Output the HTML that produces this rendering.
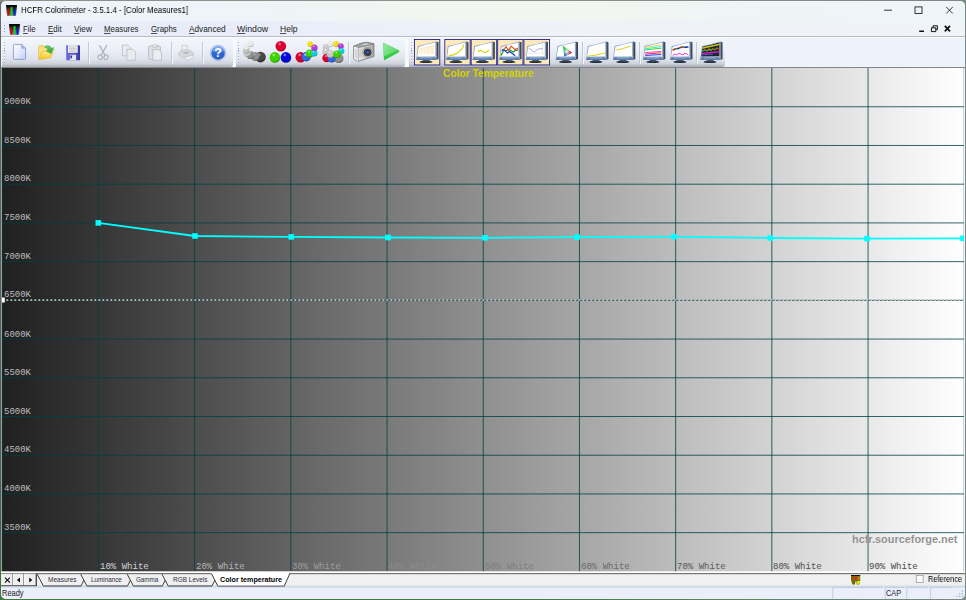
<!DOCTYPE html>
<html><head><meta charset="utf-8"><title>HCFR Colorimeter</title>
<style>
*{margin:0;padding:0;box-sizing:border-box}
html,body{width:966px;height:600px;overflow:hidden}
body{background:linear-gradient(to right,transparent 0,transparent 480px,#7c8a84 964px),linear-gradient(to bottom,#8c918c 0,#8c918c 1px,#646e64 3px,#56625a 50%,#4a5c46 88%,#3f7a3a 100%);font-family:"Liberation Sans", sans-serif;position:relative}
#win{position:absolute;left:1px;top:1px;width:964px;height:598px;border-radius:5px;overflow:hidden;background:#eef2fa}
.abs{position:absolute}
.t{position:absolute;white-space:nowrap;line-height:1;color:#000;transform-origin:0 100%}
.m{font-family:"Liberation Mono", monospace}
.b{font-weight:bold}
.g{will-change:transform}
u{text-decoration:underline;text-underline-offset:1px;text-decoration-thickness:.7px;text-decoration-color:rgba(0,0,0,.65)}
#title{left:0;top:0;width:964px;height:20px;background:linear-gradient(to right,#eef4f9 0,#eef4f8 25%,#f1f6f0 45%,#f2f6ef 58%,#eff5f6 75%,#eef4f8 100%)}
#menu{left:0;top:20px;width:964px;height:15px;background:linear-gradient(to right,#e8ecf9 0,#e9edf9 25%,#eef2f8 50%,#f0f4f8 100%)}
.tb{position:absolute;top:37px;height:28.8px;background:linear-gradient(to bottom,#f3f6fc 0,#ebeff7 40%,#dfe3ec 72%,#cfd3dc 88%,#b6bac3 96%,#a6aab3 100%);border-radius:0 0 3px 0}
.sep{position:absolute;top:40.5px;height:22px;width:1.7px;border-left:.85px solid #c2c8d4;border-right:.85px solid #f2f5fa}
.grip{position:absolute;top:40.6px;width:1.2px;height:21.6px;background:repeating-linear-gradient(to bottom,#9aaad0 0,#9aaad0 1.2px,#fbfcfe 1.2px,#fbfcfe 1.9px,transparent 1.9px,transparent 2.8px);}
.chk{position:absolute;top:38px;height:27px;width:26.3px;background:#fde9ba;border:1.1px solid #15158a}
#chart{left:1px;top:67px;width:962px;height:504px;background:linear-gradient(to right,#202020,#ffffff);box-shadow:-1px 0 0 #9c9c9c}
#tabs{left:0;top:571px;width:964px;height:15px;background:#f0f0f0}
#status{left:0;top:586px;width:964px;height:12px;background:#eaeff9}
.pane{position:absolute;top:586px;height:13px;border-top:1px solid #c3d0e4;border-left:1px solid #c3d0e4}
</style></head>
<body>
<div id="win">
<div id="title" class="abs"></div>
<svg class="abs" style="left:5px;top:4px" width="11" height="11" viewBox="0 0 11 11">
<defs><linearGradient id="ig6" x1="0" y1="0" x2="0" y2="1"><stop offset="0" stop-color="#000"/><stop offset=".45" stop-color="#333"/><stop offset="1" stop-color="#999"/></linearGradient></defs>
<path d="M0 0H11L10 11H1Z" fill="url(#ig6)"/>
<rect x="1.5" y="3.2" width="2" height="7.4" rx="1" fill="#d80000"/>
<rect x="4.5" y="2" width="2.1" height="8.6" rx="1" fill="#00d828"/>
<rect x="7.5" y="4" width="1.9" height="6.6" rx=".9" fill="#0818e0"/>
</svg>
<div class="t g" id="t0" style="left:20.00px;top:5.31px;font-size:9.2px;color:#000;transform:scale(0.857,1.0)">HCFR Colorimeter - 3.5.1.4 - [Color Measures1]</div>
<div id="menu" class="abs"></div>
<div class="abs" style="left:0;top:35px;width:964px;height:1px;background:#b9bcc4"></div>
<div class="abs" style="left:0;top:36px;width:964px;height:1px;background:#fafbfd"></div>
<div class="abs" style="left:3px;top:23.5px;width:1.3px;height:8px;background:repeating-linear-gradient(to bottom,#8fa0c4 0,#8fa0c4 1.3px,transparent 1.3px,transparent 2.9px)"></div>
<svg class="abs" style="left:8px;top:23px" width="11" height="11" viewBox="0 0 11 11">
<defs><linearGradient id="ig9" x1="0" y1="0" x2="0" y2="1"><stop offset="0" stop-color="#000"/><stop offset=".45" stop-color="#333"/><stop offset="1" stop-color="#999"/></linearGradient></defs>
<path d="M0 0H11L10 11H1Z" fill="url(#ig9)"/>
<rect x="1.5" y="3.2" width="2" height="7.4" rx="1" fill="#d80000"/>
<rect x="4.5" y="2" width="2.1" height="8.6" rx="1" fill="#00d828"/>
<rect x="7.5" y="4" width="1.9" height="6.6" rx=".9" fill="#0818e0"/>
</svg>
<svg class="abs" style="left:869px;top:-1px" width="95" height="37" viewBox="870 0 95 37">
<path d="M884 10.2H892" stroke="#222" stroke-width=".9" fill="none"/>
<rect x="915" y="6.9" width="7" height="6.6" fill="none" stroke="#222" stroke-width=".9"/>
<path d="M946.2 6.9L952.8 13.5M952.8 6.9L946.2 13.5" stroke="#222" stroke-width=".9" fill="none"/>
<path d="M919.2 31.3H924" stroke="#111" stroke-width="1.5"/>
<path d="M933 25.8H937.4V29.6H933Z" fill="#f0f4f8" stroke="#111" stroke-width="1"/>
<path d="M931.4 27.8H935.8V31.6H931.4Z" fill="#f0f4f8" stroke="#111" stroke-width="1"/>
<path d="M944.8 25.8L950 31.4M950 25.8L944.8 31.4" stroke="#111" stroke-width="1.7" fill="none"/>
</svg>
<div class="t " id="t1" style="left:21.90px;top:23.14px;font-size:9.4px;color:#1c1c1c;transform:scale(0.840,1.0)"><u>F</u>ile</div>
<div class="t " id="t2" style="left:47.00px;top:23.14px;font-size:9.4px;color:#1c1c1c;transform:scale(0.847,1.0)"><u>E</u>dit</div>
<div class="t " id="t3" style="left:73.10px;top:23.14px;font-size:9.4px;color:#1c1c1c;transform:scale(0.887,1.0)"><u>V</u>iew</div>
<div class="t " id="t4" style="left:102.70px;top:23.14px;font-size:9.4px;color:#1c1c1c;transform:scale(0.838,1.0)"><u>M</u>easures</div>
<div class="t " id="t5" style="left:149.70px;top:23.14px;font-size:9.4px;color:#1c1c1c;transform:scale(0.839,1.0)"><u>G</u>raphs</div>
<div class="t " id="t6" style="left:187.50px;top:23.14px;font-size:9.4px;color:#1c1c1c;transform:scale(0.880,1.0)"><u>A</u>dvanced</div>
<div class="t " id="t7" style="left:236.00px;top:23.14px;font-size:9.4px;color:#1c1c1c;transform:scale(0.935,1.0)"><u>W</u>indow</div>
<div class="t " id="t8" style="left:279.00px;top:23.14px;font-size:9.4px;color:#1c1c1c;transform:scale(0.912,1.0)"><u>H</u>elp</div>
<div class="tb" style="left:0.5px;width:231.0px"></div>
<div class="tb" style="left:235.0px;width:168.5px"></div>
<div class="tb" style="left:407.7px;width:316.8px"></div>
<div class="abs" style="left:231.8px;top:37.6px;width:3.0px;height:28.6px;background:linear-gradient(to bottom,#f9fafd,#f4f6fb 70%,#fafbfd);border-radius:0 0 1px 1px"></div>
<div class="abs" style="left:403.8px;top:37.6px;width:3.7px;height:28.6px;background:linear-gradient(to bottom,#f9fafd,#f4f6fb 70%,#fafbfd);border-radius:0 0 1px 1px"></div>
<div class="abs" style="left:0;top:65.5px;width:964px;height:1.6px;background:linear-gradient(to bottom,#9a9da3,#6f7074)"></div>
<div class="grip" style="left:3px"></div>
<div class="grip" style="left:237px"></div>
<div class="grip" style="left:410px"></div>
<div class="sep" style="left:86.8px"></div>
<div class="sep" style="left:170.0px"></div>
<div class="sep" style="left:201.4px"></div>
<div class="sep" style="left:347.1px"></div>
<div class="sep" style="left:580.8px"></div>
<div class="sep" style="left:638.3px"></div>
<div class="sep" style="left:695.3px"></div>
<svg class="abs" style="left:-1px;top:35px" width="966" height="34" viewBox="0 36 966 34"><rect x="414.40" y="39.45" width="25.40" height="25.5" fill="#fde9ba" stroke="#16168a" stroke-width=".85"/><rect x="444.80" y="39.45" width="25.35" height="25.5" fill="#fde9ba" stroke="#16168a" stroke-width=".85"/><rect x="471.15" y="39.45" width="25.55" height="25.5" fill="#fde9ba" stroke="#16168a" stroke-width=".85"/><rect x="497.70" y="39.45" width="25.25" height="25.5" fill="#fde9ba" stroke="#16168a" stroke-width=".85"/><rect x="523.95" y="39.45" width="25.65" height="25.5" fill="#fde9ba" stroke="#16168a" stroke-width=".85"/></svg>
<svg class="abs" style="left:-1px;top:35px" width="966" height="34" viewBox="0 36 966 34">
<defs>
<radialGradient id="b_red" cx=".4" cy=".28" r=".78"><stop offset="0" stop-color="#ffb0c0"/><stop offset=".22" stop-color="#dc0030"/><stop offset=".68" stop-color="#dc0030"/><stop offset="1" stop-color="#9a0020"/></radialGradient>
<radialGradient id="b_green" cx=".4" cy=".28" r=".78"><stop offset="0" stop-color="#d0ffb0"/><stop offset=".22" stop-color="#3cd400"/><stop offset=".68" stop-color="#3cd400"/><stop offset="1" stop-color="#228a00"/></radialGradient>
<radialGradient id="b_blue" cx=".4" cy=".28" r=".78"><stop offset="0" stop-color="#b0b8ff"/><stop offset=".22" stop-color="#0408dc"/><stop offset=".68" stop-color="#0408dc"/><stop offset="1" stop-color="#00068c"/></radialGradient>
<radialGradient id="b_lblue" cx=".4" cy=".28" r=".78"><stop offset="0" stop-color="#e8f4ff"/><stop offset=".22" stop-color="#2a6ee0"/><stop offset=".68" stop-color="#2a6ee0"/><stop offset="1" stop-color="#0a2c98"/></radialGradient>
<radialGradient id="b_yellow" cx=".4" cy=".28" r=".78"><stop offset="0" stop-color="#ffffc0"/><stop offset=".22" stop-color="#f0dc10"/><stop offset=".68" stop-color="#f0dc10"/><stop offset="1" stop-color="#a09000"/></radialGradient>
<radialGradient id="b_magenta" cx=".4" cy=".28" r=".78"><stop offset="0" stop-color="#f0c0ff"/><stop offset=".22" stop-color="#b040e0"/><stop offset=".68" stop-color="#b040e0"/><stop offset="1" stop-color="#702090"/></radialGradient>
<radialGradient id="b_cyan" cx=".4" cy=".28" r=".78"><stop offset="0" stop-color="#c0ffff"/><stop offset=".22" stop-color="#10d0d8"/><stop offset=".68" stop-color="#10d0d8"/><stop offset="1" stop-color="#008890"/></radialGradient>
<radialGradient id="b_white" cx=".4" cy=".28" r=".78"><stop offset="0" stop-color="#ffffff"/><stop offset=".22" stop-color="#e8e8e8"/><stop offset=".68" stop-color="#e8e8e8"/><stop offset="1" stop-color="#9a9a9a"/></radialGradient>
<radialGradient id="b_lgrey" cx=".4" cy=".28" r=".78"><stop offset="0" stop-color="#ffffff"/><stop offset=".22" stop-color="#c8c8c8"/><stop offset=".68" stop-color="#c8c8c8"/><stop offset="1" stop-color="#808080"/></radialGradient>
<radialGradient id="b_grey" cx=".4" cy=".28" r=".78"><stop offset="0" stop-color="#e0e0e0"/><stop offset=".22" stop-color="#909090"/><stop offset=".68" stop-color="#909090"/><stop offset="1" stop-color="#505050"/></radialGradient>
<radialGradient id="b_dgrey" cx=".4" cy=".28" r=".78"><stop offset="0" stop-color="#b0b0b0"/><stop offset=".22" stop-color="#484848"/><stop offset=".68" stop-color="#484848"/><stop offset="1" stop-color="#1c1c1c"/></radialGradient>
<linearGradient id="docg" x1="0" y1="0" x2="1" y2="1"><stop offset="0" stop-color="#ffffff"/><stop offset=".45" stop-color="#e6ecfd"/><stop offset="1" stop-color="#bfcdf7"/></linearGradient>
<linearGradient id="fold1" x1="0" y1="0" x2="0" y2="1"><stop offset="0" stop-color="#fff6b0"/><stop offset="1" stop-color="#f7c414"/></linearGradient>
<linearGradient id="arrg" x1="0" y1="0" x2="1" y2="1"><stop offset="0" stop-color="#7ad87a"/><stop offset="1" stop-color="#2a9a2a"/></linearGradient>
<linearGradient id="savg" x1="0" y1="0" x2="1" y2="0"><stop offset="0" stop-color="#6c6ce0"/><stop offset=".6" stop-color="#5656c8"/><stop offset="1" stop-color="#3636a0"/></linearGradient>
<linearGradient id="helpg" x1="0" y1="0" x2="0" y2="1"><stop offset="0" stop-color="#6c9cf0"/><stop offset=".5" stop-color="#3068d6"/><stop offset="1" stop-color="#2a5cc6"/></linearGradient>
<linearGradient id="bez" x1="0" y1="0" x2="0" y2="1"><stop offset="0" stop-color="#b4c8e0"/><stop offset=".45" stop-color="#7c9cc6"/><stop offset="1" stop-color="#56749e"/></linearGradient>
<linearGradient id="side" x1="0" y1="0" x2="1" y2="0"><stop offset="0" stop-color="#5c6e84"/><stop offset="1" stop-color="#27323e"/></linearGradient>
<linearGradient id="frm" x1="0" y1="0" x2="1" y2="0"><stop offset="0" stop-color="#7a92b6"/><stop offset=".5" stop-color="#b6c8e0"/><stop offset="1" stop-color="#869ec4"/></linearGradient>
<linearGradient id="camg" x1="0" y1="0" x2="1" y2="0"><stop offset="0" stop-color="#f4f4f4"/><stop offset=".3" stop-color="#e2e2e2"/><stop offset=".6" stop-color="#c8c8c8"/><stop offset="1" stop-color="#a8a8a8"/></linearGradient>
<linearGradient id="playg" x1="0" y1="0" x2="1" y2="1"><stop offset="0" stop-color="#9aeaa4"/><stop offset="1" stop-color="#46d258"/></linearGradient>
<linearGradient id="cie1" x1="0" y1="0" x2="0" y2="1"><stop offset="0" stop-color="#10e010"/><stop offset=".5" stop-color="#20d8c8"/><stop offset="1" stop-color="#1018f0"/></linearGradient>
<linearGradient id="cie2" x1="0" y1="0" x2="1" y2="0"><stop offset="0" stop-color="#ff0000" stop-opacity="0"/><stop offset=".4" stop-color="#ffe63c" stop-opacity=".35"/><stop offset=".72" stop-color="#ff3c78" stop-opacity=".85"/><stop offset="1" stop-color="#ff0000" stop-opacity="1"/></linearGradient>
<radialGradient id="cie3" cx=".42" cy=".56" r=".3"><stop offset="0" stop-color="#fff" stop-opacity=".85"/><stop offset="1" stop-color="#fff" stop-opacity="0"/></radialGradient>
<g id="mon"><ellipse cx="9.6" cy="20.5" rx="6.5" ry="1.2" fill="#222e3a"/><path d="M6.6 18.2H12.8L13.6 20H6Z" fill="#46566a"/><path d="M19.8 0L22.1 .8V17.5L19.8 18.6Z" fill="url(#side)"/><path d="M1.5 4.5L20 0V18.6H0Z" fill="url(#frm)"/><path d="M0.2 15L20 14.6V18.6H0Z" fill="url(#bez)"/><path d="M2.3 5.3L19 1.2V14.8L.8 15.1Z" fill="#fff"/><path d="M1.4 16.2h2v1.2h-2zM16 16h2.3v1.2H16z" fill="#54688a" opacity=".8"/></g>
</defs>
<path d="M14.4 44.4H21.8L25.6 48.2V58.4Q25.6 59.4 24.6 59.4H14.4Q13.4 59.4 13.4 58.4V45.4Q13.4 44.4 14.4 44.4Z" fill="url(#docg)" stroke="#8296c8" stroke-width=".85"/>
<path d="M21.8 44.6V48.2H25.4" fill="#a8b8e6" stroke="#8296c8" stroke-width=".7"/>
<path d="M38.5 58.6V46.8Q38.5 45.6 39.7 45.6H43.2L44.6 47.2H49.8Q50.6 47.2 50.6 48V51L41.6 52.6L39 59.4Z" fill="#f8e07a" stroke="#dca828" stroke-width=".5"/>
<path d="M39.2 59.6L41.8 51.9L54 49.4L50.8 57.8Z" fill="url(#fold1)" stroke="#e0ac20" stroke-width=".5"/>
<path d="M44.4 46.9Q48.8 43.6 51.4 48.2L53.6 47.6L51.2 53.6L46 51L48.2 50.2Q47.2 47.4 44.4 46.9Z" fill="url(#arrg)" stroke="#2f962f" stroke-width=".4"/>
<path d="M66.2 45.2H79.2L80 46V60.2H66.2Z" fill="url(#savg)"/>
<rect x="68" y="45.2" width="9.7" height="7.6" fill="#f2f2f2"/>
<path d="M69.2 47H76.6M69.2 48.4H76.6M69.2 49.8H76.6M69.2 51.2H76.6" stroke="#bcbcbc" stroke-width=".7"/>
<rect x="69.9" y="54.8" width="6.2" height="5.4" fill="#e6e6ea"/>
<path d="M70.4 55.4H72.4L71.6 58.6H70.4Z" fill="#2e2e98"/>
<g fill="none" stroke="#b0b2b6" stroke-width="1.2" stroke-linecap="round"><path d="M99.6 45.6L105 55.2M106.6 45.6L101.2 55.2"/><ellipse cx="100.2" cy="57.2" rx="2" ry="2.4" transform="rotate(-20 100.2 57.2)"/><ellipse cx="106" cy="57.2" rx="2" ry="2.4" transform="rotate(20 106 57.2)"/></g>
<g fill="#e9ebef" stroke="#b9bcc4" stroke-width=".8"><path d="M122.4 45.1H128L130.6 47.7V55.8H122.4Z"/><path d="M126.9 49.3H132.8L135.6 52.1V60.1H126.9Z"/></g>
<g stroke="#b4b7bf" stroke-width=".8"><rect x="148.5" y="45.8" width="12" height="13.6" rx="1.6" fill="#dddfe4"/><rect x="152.4" y="44.9" width="4.6" height="2.3" rx="1" fill="#f4f4f6"/><path d="M152.8 49.6H158.8L161.5 52.3V60.3H152.8Z" fill="#ebedf0"/></g>
<g stroke="#b8bac0" stroke-width=".6"><path d="M181.4 51.5L182.2 45.3H187.2L188 51.5Z" fill="#f0f0f2"/><ellipse cx="186" cy="54" rx="7.4" ry="4.2" fill="#d6d8dc"/><path d="M183.5 52.2H188.5V53.6H183.5Z" fill="#a8aab0" stroke="none"/><path d="M184.6 57L192.6 55.4L194 58.2L186.4 60.2Z" fill="#f2f2f4"/></g>
<circle cx="218.1" cy="52.9" r="7.9" fill="#d4def2" stroke="#93a8d6" stroke-width=".5"/>
<circle cx="218.1" cy="52.9" r="6.8" fill="url(#helpg)"/>
<path d="M212 50.8A6.5 6.5 0 0 1 224.2 50.8Q218 54 212 50.8Z" fill="#fff" opacity=".2"/>
<text x="218.1" y="57.4" text-anchor="middle" font-family="Liberation Sans, sans-serif" font-weight="bold" font-size="12.4" fill="#fff">?</text>
<circle cx="260.5" cy="57.1" r="5.3" fill="url(#b_dgrey)"/>
<circle cx="255.2" cy="56.5" r="4.4" fill="url(#b_grey)"/>
<circle cx="250.6" cy="55.2" r="3.9" fill="url(#b_grey)"/>
<circle cx="247.2" cy="53.4" r="3.4" fill="url(#b_lgrey)"/>
<circle cx="246" cy="50.4" r="3.2" fill="url(#b_lgrey)"/>
<circle cx="246.4" cy="47.2" r="3.2" fill="url(#b_white)"/>
<circle cx="250.7" cy="43.9" r="3.1" fill="url(#b_white)"/>
<circle cx="280.8" cy="46.3" r="5.3" fill="url(#b_red)"/>
<circle cx="274.9" cy="57.4" r="5.3" fill="url(#b_green)"/>
<circle cx="285.9" cy="57.4" r="5.3" fill="url(#b_blue)"/>
<circle cx="300.7" cy="57.2" r="5.2" fill="url(#b_red)"/>
<circle cx="306.2" cy="56.8" r="4.7" fill="url(#b_lblue)"/>
<circle cx="309.8" cy="53.4" r="3.9" fill="url(#b_green)"/>
<circle cx="314.2" cy="53.2" r="3.3" fill="url(#b_cyan)"/>
<circle cx="314.4" cy="47.8" r="3.2" fill="url(#b_magenta)"/>
<circle cx="310.2" cy="44.1" r="2.9" fill="url(#b_yellow)"/>
<circle cx="326" cy="47.4" r="3.3" fill="url(#b_lgrey)"/>
<circle cx="326.2" cy="51.6" r="3.8" fill="url(#b_lgrey)"/>
<circle cx="330.4" cy="44" r="2.9" fill="url(#b_white)"/>
<circle cx="336.1" cy="44" r="2.9" fill="url(#b_yellow)"/>
<circle cx="340.8" cy="46.2" r="2.9" fill="url(#b_magenta)"/>
<circle cx="341.4" cy="51" r="3" fill="url(#b_cyan)"/>
<circle cx="326.6" cy="58" r="4.3" fill="url(#b_red)"/>
<circle cx="338.6" cy="58.2" r="4.9" fill="url(#b_grey)"/>
<circle cx="331.6" cy="58.6" r="3.9" fill="url(#b_lblue)"/>
<circle cx="330.4" cy="54" r="3.9" fill="url(#b_lgrey)"/>
<circle cx="337" cy="54.2" r="3.8" fill="url(#b_green)"/>
<path d="M353.5 46.2L358.4 44.4L361 43.3L366.6 42.3L374 43.8V56.6L358.2 61.4L353.5 58.9Z" fill="url(#camg)" stroke="#6e6e6e" stroke-width=".7" stroke-linejoin="round"/>
<path d="M353.6 46.2L358.4 44.4L361 43.3L366.6 42.3L374 43.8L358.4 47.7Z" fill="#a4a4a4" stroke="#6e6e6e" stroke-width=".5"/>
<path d="M361.4 44.4L366.6 43.3L369.6 43.9L364.6 45.1Z" fill="#d8d8d8"/>
<path d="M353.9 46.6L358.1 47.9V61L353.9 58.7Z" fill="#f2f2f2"/>
<path d="M355.2 48.6V58.2M356.6 49V58.8" stroke="#c2c2c2" stroke-width=".7"/>
<path d="M358.3 47.8V61.2" stroke="#8c8c8c" stroke-width=".6"/>
<path d="M359.4 50H361.4M359.4 52H361.4M359.4 54H361.4M359.4 56H361.4" stroke="#909090" stroke-width=".5"/>
<circle cx="367.6" cy="52.3" r="5" fill="#c6c6c6" stroke="#7a7a7a" stroke-width=".5"/><circle cx="367.6" cy="52.3" r="3.9" fill="#404040"/><circle cx="367.6" cy="52.3" r="2.6" fill="#2a2a2a" stroke="#666" stroke-width=".4"/><circle cx="367.6" cy="52.3" r="1.35" fill="#2468ee"/>
<path d="M383.2 42.8L399.2 50.4V52L384 60.4Z" fill="#30cc42"/>
<path d="M383.4 43L398.6 50.2L383.6 56.6Z" fill="url(#playg)"/>
<use href="#mon" x="416.4" y="41.4"/>
<use href="#mon" x="446.3" y="41.4"/>
<use href="#mon" x="472.7" y="41.4"/>
<use href="#mon" x="499.4" y="41.4"/>
<use href="#mon" x="525.8" y="41.4"/>
<use href="#mon" x="555.9" y="41.4"/>
<use href="#mon" x="586.3" y="41.4"/>
<use href="#mon" x="613.2" y="41.4"/>
<use href="#mon" x="643.2" y="41.4"/>
<use href="#mon" x="670.3" y="41.4"/>
<use href="#mon" x="700.4" y="41.4"/>
<path d="M419.59999999999997 48.6L434.0 45.0V53.4L419.0 54.0Z" fill="#fbe3b4"/>
<path d="M419.4 50.3 L434.0 47.0" fill="none" stroke="#fff" stroke-width="0.8" stroke-linejoin="round" stroke-linecap="round" />
<path d="M419.4 52.0 L434.0 49.2" fill="none" stroke="#fff" stroke-width="0.8" stroke-linejoin="round" stroke-linecap="round" />
<path d="M419.4 53.4 L434.0 51.3" fill="none" stroke="#fff" stroke-width="0.8" stroke-linejoin="round" stroke-linecap="round" />
<path d="M423.0 46.8 L423.0 53.8" fill="none" stroke="#fff" stroke-width="0.6" stroke-linejoin="round" stroke-linecap="round" />
<path d="M426.6 46.0 L426.6 53.8" fill="none" stroke="#fff" stroke-width="0.6" stroke-linejoin="round" stroke-linecap="round" />
<path d="M430.3 45.1 L430.3 53.8" fill="none" stroke="#fff" stroke-width="0.6" stroke-linejoin="round" stroke-linecap="round" />
<path d="M449.3 55.8 L452.5 55.1 L455.5 54.0 L457.9 52.6 L459.9 50.9 L461.7 49.0 L463.0 47.0 L463.6 45.0" fill="none" stroke="#d8d400" stroke-width="1.15" stroke-linejoin="round" stroke-linecap="round" stroke-dasharray="1.7 .45"/>
<path d="M478.2 51.599999999999994Q480.3 49.4 482.5 51.4T486.5 51.8L488.8 50.5" fill="none" stroke="#d8d400" stroke-width="1.15" stroke-linecap="round"/>
<path d="M501.2 55.1 L503.5 50.8 L506.1 50.5 L509.3 49.6 L513.4 52.2 L515.1 50.5 L517.6 50.2" fill="none" stroke="#1f9a1f" stroke-width="1.2" stroke-linejoin="round" stroke-linecap="round" />
<path d="M502.1 50.5 L503.5 49.3 L507.6 53.1 L509.6 51.6 L514.8 55.4" fill="none" stroke="#1840c4" stroke-width="1.2" stroke-linejoin="round" stroke-linecap="round" />
<path d="M504.7 48.7 L506.1 46.7 L508.5 50.5 L511.2 46.1 L515.1 49.6 L517.4 48.4" fill="none" stroke="#e8501c" stroke-width="1.2" stroke-linejoin="round" stroke-linecap="round" />
<path d="M529.0 48.2 L534.3 52.2 L537.7 49.3 L542.4 48.4" fill="none" stroke="#a898e6" stroke-width="0.9" stroke-linejoin="round" stroke-linecap="round" />
<path d="M542.7 44.4 L542.7 54.9" fill="none" stroke="#a8d8a0" stroke-width="0.5" stroke-linejoin="round" stroke-linecap="round" stroke-dasharray="1 .8"/>
<path d="M527.8 53.6 L542.8 53.2" fill="none" stroke="#dcdce4" stroke-width="0.5" stroke-linejoin="round" stroke-linecap="round" />
<path d="M562.6999999999999 45.6L572.1 52.8L564.4 56.599999999999994Z" fill="url(#cie1)"/><path d="M562.6999999999999 45.6L572.1 52.8L564.4 56.599999999999994Z" fill="url(#cie2)"/><path d="M562.6999999999999 45.6L572.1 52.8L564.4 56.599999999999994Z" fill="url(#cie3)"/>
<path d="M589.0 55.9 L594.3 55.4 L598.3 54.4 L604.5 53.0" fill="none" stroke="#dcd820" stroke-width="1.1" stroke-linejoin="round" stroke-linecap="round" stroke-dasharray="1.6 .5"/>
<path d="M616.6 50.0 L621.2 49.0 L625.2 47.8 L630.0 46.2" fill="none" stroke="#dcd820" stroke-width="1.1" stroke-linejoin="round" stroke-linecap="round" stroke-dasharray="1.6 .5"/>
<path d="M645.6 47.4 L661.0 44.8" fill="none" stroke="#f0dc30" stroke-width="1.0" stroke-linejoin="round" stroke-linecap="round" />
<path d="M645.6 48.7 L661.0 46.6" fill="none" stroke="#30e8e0" stroke-width="1.0" stroke-linejoin="round" stroke-linecap="round" />
<path d="M645.6 49.9 L661.0 48.2" fill="none" stroke="#38d838" stroke-width="1.0" stroke-linejoin="round" stroke-linecap="round" />
<path d="M645.6 52.6 L661.0 51.4" fill="none" stroke="#f040e0" stroke-width="1.0" stroke-linejoin="round" stroke-linecap="round" />
<path d="M645.6 54.1 L661.0 52.8" fill="none" stroke="#f03030" stroke-width="1.0" stroke-linejoin="round" stroke-linecap="round" />
<path d="M645.6 55.4 L661.0 54.6" fill="none" stroke="#3030f0" stroke-width="1.0" stroke-linejoin="round" stroke-linecap="round" />
<path d="M673.1 50.0 L675.3 48.8" fill="none" stroke="#e01818" stroke-width="1.5" stroke-linejoin="round" stroke-linecap="round" />
<path d="M675.3 48.8 L677.8 48.6" fill="none" stroke="#18a018" stroke-width="1.5" stroke-linejoin="round" stroke-linecap="round" />
<path d="M677.8 48.6 L680.3 47.6" fill="none" stroke="#1828d8" stroke-width="1.5" stroke-linejoin="round" stroke-linecap="round" />
<path d="M680.3 47.6 L682.8 47.0" fill="none" stroke="#e01818" stroke-width="1.5" stroke-linejoin="round" stroke-linecap="round" />
<path d="M682.8 47.0 L685.3 47.3" fill="none" stroke="#18a018" stroke-width="1.5" stroke-linejoin="round" stroke-linecap="round" />
<path d="M685.3 47.3 L687.9 47.0" fill="none" stroke="#1828d8" stroke-width="1.5" stroke-linejoin="round" stroke-linecap="round" />
<path d="M672.9 55.4 L674.9 54.0 L676.9 55.0 L678.9 53.0 L680.9 54.2 L682.9 55.0 L684.9 53.2 L686.7 53.8 L688.1 55.0" fill="none" stroke="#f030e8" stroke-width="1.0" stroke-linejoin="round" stroke-linecap="round" />
<path d="M702.6999999999999 46.699999999999996L719.4 42.6V56.2L701.1999999999999 56.5Z" fill="#1e2630"/>
<path d="M703.0 48.0 L718.8 44.6" fill="none" stroke="#c8c41a" stroke-width="1.5" stroke-linejoin="round" stroke-linecap="round" />
<path d="M702.8 51.0 L704.9 49.8" fill="none" stroke="#30b830" stroke-width="1.4" stroke-linejoin="round" stroke-linecap="round" />
<path d="M704.9 49.8 L706.9 50.8" fill="none" stroke="#e04820" stroke-width="1.4" stroke-linejoin="round" stroke-linecap="round" />
<path d="M706.9 50.8 L708.9 49.2" fill="none" stroke="#30b830" stroke-width="1.4" stroke-linejoin="round" stroke-linecap="round" />
<path d="M708.9 49.2 L710.9 50.2" fill="none" stroke="#e08820" stroke-width="1.4" stroke-linejoin="round" stroke-linecap="round" />
<path d="M710.9 50.2 L712.9 48.8" fill="none" stroke="#30b830" stroke-width="1.4" stroke-linejoin="round" stroke-linecap="round" />
<path d="M712.9 48.8 L714.9 49.6" fill="none" stroke="#e04820" stroke-width="1.4" stroke-linejoin="round" stroke-linecap="round" />
<path d="M714.9 49.6 L716.9 48.2" fill="none" stroke="#30b830" stroke-width="1.4" stroke-linejoin="round" stroke-linecap="round" />
<path d="M716.9 48.2 L718.8 48.8" fill="none" stroke="#e04820" stroke-width="1.4" stroke-linejoin="round" stroke-linecap="round" />
<path d="M702.4 53.4 L718.8 51.8" fill="none" stroke="#e020d8" stroke-width="1.3" stroke-linejoin="round" stroke-linecap="round" />
<path d="M702.0 54.8 L712.4 54.3" fill="none" stroke="#7058d0" stroke-width="0.8" stroke-linejoin="round" stroke-linecap="round" />
</svg>
<div id="chart" class="abs">
<svg class="abs" style="left:0;top:0" width="962" height="504" viewBox="2 68 962 504">
<path d="M2.25 68V572" stroke="#004040" stroke-width=".8"/>
<path d="M98.45 68V572" stroke="#004040" stroke-width=".8"/>
<path d="M194.65 68V572" stroke="#004040" stroke-width=".8"/>
<path d="M290.85 68V572" stroke="#004040" stroke-width=".8"/>
<path d="M387.05 68V572" stroke="#004040" stroke-width=".8"/>
<path d="M483.25 68V572" stroke="#004040" stroke-width=".8"/>
<path d="M579.45 68V572" stroke="#004040" stroke-width=".8"/>
<path d="M675.65 68V572" stroke="#004040" stroke-width=".8"/>
<path d="M771.85 68V572" stroke="#004040" stroke-width=".8"/>
<path d="M868.05 68V572" stroke="#004040" stroke-width=".8"/>
<path d="M964.25 68V572" stroke="#004040" stroke-width=".8"/>
<path d="M2 106.75H964" stroke="#004040" stroke-width=".8"/>
<path d="M2 145.47H964" stroke="#004040" stroke-width=".8"/>
<path d="M2 184.19H964" stroke="#004040" stroke-width=".8"/>
<path d="M2 222.91H964" stroke="#004040" stroke-width=".8"/>
<path d="M2 261.63H964" stroke="#004040" stroke-width=".8"/>
<path d="M2 300.35H964" stroke="#004040" stroke-width=".8"/>
<path d="M2 339.07H964" stroke="#004040" stroke-width=".8"/>
<path d="M2 377.79H964" stroke="#004040" stroke-width=".8"/>
<path d="M2 416.51H964" stroke="#004040" stroke-width=".8"/>
<path d="M2 455.23H964" stroke="#004040" stroke-width=".8"/>
<path d="M2 493.95H964" stroke="#004040" stroke-width=".8"/>
<path d="M2 532.67H964" stroke="#004040" stroke-width=".8"/>
<path d="M6.4 300.1H964" stroke="#bebebe" stroke-width="1.8" stroke-dasharray="1.8 2.2"/>
<rect x="2" y="297.5" width="2.8" height="5" fill="#fff"/>
<path d="M98.3 222.9 L195.0 236.0 L291.3 236.9 L388.0 237.5 L485.0 237.8 L577.0 237.1 L674.0 236.6 L770.2 238.0 L867.1 238.6 L963.0 238.3" stroke="#00ffff" stroke-width="1.85" fill="none"/>
<rect x="95.5" y="220.1" width="5.6" height="5.6" fill="#00ffff"/>
<rect x="192.2" y="233.2" width="5.6" height="5.6" fill="#00ffff"/>
<rect x="288.5" y="234.1" width="5.6" height="5.6" fill="#00ffff"/>
<rect x="385.2" y="234.7" width="5.6" height="5.6" fill="#00ffff"/>
<rect x="482.2" y="235.0" width="5.6" height="5.6" fill="#00ffff"/>
<rect x="574.2" y="234.3" width="5.6" height="5.6" fill="#00ffff"/>
<rect x="671.2" y="233.8" width="5.6" height="5.6" fill="#00ffff"/>
<rect x="767.4" y="235.2" width="5.6" height="5.6" fill="#00ffff"/>
<rect x="864.3" y="235.8" width="5.6" height="5.6" fill="#00ffff"/>
<rect x="960.2" y="235.5" width="5.6" height="5.6" fill="#00ffff"/>
</svg>
<div class="t m" id="t9" style="left:1.80px;top:28px;font-size:9.15px;line-height:11px;color:#bcbcbc;transform:scale(0.986,1)">9000K</div>
<div class="t m" id="t10" style="left:1.80px;top:67px;font-size:9.15px;line-height:11px;color:#bcbcbc;transform:scale(0.986,1)">8500K</div>
<div class="t m" id="t11" style="left:1.80px;top:105px;font-size:9.15px;line-height:11px;color:#bcbcbc;transform:scale(0.986,1)">8000K</div>
<div class="t m" id="t12" style="left:1.80px;top:144px;font-size:9.15px;line-height:11px;color:#bcbcbc;transform:scale(0.986,1)">7500K</div>
<div class="t m" id="t13" style="left:1.80px;top:183px;font-size:9.15px;line-height:11px;color:#bcbcbc;transform:scale(0.986,1)">7000K</div>
<div class="t m" id="t14" style="left:1.80px;top:221px;font-size:9.15px;line-height:11px;color:#bcbcbc;transform:scale(0.986,1)">6500K</div>
<div class="t m" id="t15" style="left:1.80px;top:261px;font-size:9.15px;line-height:11px;color:#bcbcbc;transform:scale(0.986,1)">6000K</div>
<div class="t m" id="t16" style="left:1.80px;top:299px;font-size:9.15px;line-height:11px;color:#bcbcbc;transform:scale(0.986,1)">5500K</div>
<div class="t m" id="t17" style="left:1.80px;top:338px;font-size:9.15px;line-height:11px;color:#bcbcbc;transform:scale(0.986,1)">5000K</div>
<div class="t m" id="t18" style="left:1.80px;top:376px;font-size:9.15px;line-height:11px;color:#bcbcbc;transform:scale(0.986,1)">4500K</div>
<div class="t m" id="t19" style="left:1.80px;top:415px;font-size:9.15px;line-height:11px;color:#bcbcbc;transform:scale(0.986,1)">4000K</div>
<div class="t m" id="t20" style="left:1.80px;top:454px;font-size:9.15px;line-height:11px;color:#bcbcbc;transform:scale(0.986,1)">3500K</div>
<div class="t m" id="t21" style="left:97.75px;top:493px;font-size:9.15px;line-height:11px;color:#d2d2d2;transform:scale(0.990,1)">10% White</div>
<div class="t m" id="t22" style="left:193.95px;top:493px;font-size:9.15px;line-height:11px;color:#b4b4b4;transform:scale(0.990,1)">20% White</div>
<div class="t m" id="t23" style="left:290.15px;top:493px;font-size:9.15px;line-height:11px;color:#9c9c9c;transform:scale(0.990,1)">30% White</div>
<div class="t m" id="t24" style="left:386.35px;top:493px;font-size:9.15px;line-height:11px;color:#8c8c8c;transform:scale(0.990,1)">40% White</div>
<div class="t m" id="t25" style="left:482.55px;top:493px;font-size:9.15px;line-height:11px;color:#7e7e7e;transform:scale(0.990,1)">50% White</div>
<div class="t m" id="t26" style="left:578.75px;top:493px;font-size:9.15px;line-height:11px;color:#6a6a6a;transform:scale(0.990,1)">60% White</div>
<div class="t m" id="t27" style="left:674.95px;top:493px;font-size:9.15px;line-height:11px;color:#5a5a5a;transform:scale(0.990,1)">70% White</div>
<div class="t m" id="t28" style="left:771.15px;top:493px;font-size:9.15px;line-height:11px;color:#505050;transform:scale(0.990,1)">80% White</div>
<div class="t m" id="t29" style="left:867.35px;top:493px;font-size:9.15px;line-height:11px;color:#484848;transform:scale(0.990,1)">90% White</div>
<div class="t b" id="t30" style="left:440.50px;top:1.33px;font-size:10px;color:#d3d300;transform:scale(1.023,1.0)">Color Temperature</div>
<div class="t b" id="t31" style="left:850.30px;top:465.86px;font-size:10.8px;color:#949494;transform:scale(1.010,1.0)">hcfr.sourceforge.net</div>
</div>
<div id="tabs" class="abs"></div>
<div id="status" class="abs"></div>
<svg class="abs" style="left:-1px;top:569px" width="966" height="31" viewBox="0 570 966 31">
<rect x="0" y="571.3" width="966" height="1.8" fill="#fff"/>
<rect x="0" y="573" width="966" height="1.2" fill="#747474"/>
<rect x="0" y="585.6" width="966" height="1" fill="#d4d6da"/>
<rect x="0" y="586.5" width="966" height="1" fill="#c6d4ea"/>
<rect x="1" y="574" width="36" height="12.2" fill="#4a4a4a"/>
<rect x="1.2" y="574.2" width="11.0" height="11" fill="#f0f0f0"/>
<path d="M1.2 585.2V574.2H12.2" fill="none" stroke="#fff" stroke-width=".8"/>
<rect x="13" y="574.2" width="10.2" height="11" fill="#f0f0f0"/>
<path d="M13 585.2V574.2H23.2" fill="none" stroke="#fff" stroke-width=".8"/>
<rect x="24" y="574.2" width="11.600000000000001" height="11" fill="#f0f0f0"/>
<path d="M24 585.2V574.2H35.6" fill="none" stroke="#fff" stroke-width=".8"/>
<rect x="12.2" y="574.2" width=".8" height="11" fill="#9a9a9a"/><rect x="23.2" y="574.2" width=".8" height="11" fill="#9a9a9a"/>
<path d="M4.9 577.6L9.9 582.6M9.9 577.6L4.9 582.6" stroke="#111" stroke-width="1.2"/>
<path d="M20 577.6V582.4L16.9 580Z" fill="#111"/><path d="M29.2 577.6V582.4L32.3 580Z" fill="#111"/>
<path d="M37.2 574.2L43.400000000000006 586H81.0L83.9 580.2" fill="none" stroke="#2e2e2e" stroke-width=".9" stroke-linejoin="miter"/>
<path d="M43.400000000000006 586H81.0" stroke="#8a8a8a" stroke-width=".9"/>
<path d="M80.7 574.2L86.9 586H127.5L130.4 580.2" fill="none" stroke="#2e2e2e" stroke-width=".9" stroke-linejoin="miter"/>
<path d="M86.9 586H127.5" stroke="#8a8a8a" stroke-width=".9"/>
<path d="M127.2 574.2L133.4 586H162.3L165.2 580.2" fill="none" stroke="#2e2e2e" stroke-width=".9" stroke-linejoin="miter"/>
<path d="M133.4 586H162.3" stroke="#8a8a8a" stroke-width=".9"/>
<path d="M162.0 574.2L168.2 586H212.0L214.89999999999998 580.2" fill="none" stroke="#2e2e2e" stroke-width=".9" stroke-linejoin="miter"/>
<path d="M168.2 586H212.0" stroke="#8a8a8a" stroke-width=".9"/>
<path d="M211.1 572.5L217.89999999999998 586.2H284.20000000000005L290.20000000000005 572.5Z" fill="#fff"/>
<path d="M211.7 574L217.89999999999998 586.2H284.20000000000005L290.0 573.2" fill="none" stroke="#2e2e2e" stroke-width=".9"/>
<path d="M217.89999999999998 586.2H284.20000000000005" stroke="#9a9a9a" stroke-width=".9"/>
<path d="M851 575H860.2V580.6L859.4 584.4H856.8L856.4 581.4H855.4L855 584.4H852.4L851 580Z" fill="#6e6e08"/>
<rect x="851" y="575" width="9.2" height="1" fill="#141400"/>
<path d="M853.2 577H857.6V579.6H853.6Z" fill="#f02828"/><path d="M857 581H860L859.2 584.2H857.4Z" fill="#f0f000"/><rect x="857.8" y="576.4" width="1.8" height="3.6" fill="#9a9a10"/>
<rect x="916.3" y="575.4" width="6.8" height="7.2" fill="#fff" stroke="#9c9c9c" stroke-width=".8"/>
<path d="M832.8 599V587.6H882.5" fill="none" stroke="#b4c8e2" stroke-width=".8"/>
<path d="M885.3 599V587.6H903.8" fill="none" stroke="#b4c8e2" stroke-width=".8"/>
<path d="M906.6999999999999 599V587.6H927.4" fill="none" stroke="#b4c8e2" stroke-width=".8"/>
<path d="M930.5999999999999 599V587.6H951.8" fill="none" stroke="#b4c8e2" stroke-width=".8"/>
<rect x="961.8" y="590.4" width="1.3" height="1.3" fill="#9db2d4"/>
<rect x="961.8" y="593" width="1.3" height="1.3" fill="#9db2d4"/>
<rect x="961.8" y="595.7" width="1.3" height="1.3" fill="#9db2d4"/>
<rect x="959.1" y="593" width="1.3" height="1.3" fill="#9db2d4"/>
<rect x="959.1" y="595.7" width="1.3" height="1.3" fill="#9db2d4"/>
<rect x="956.4" y="595.7" width="1.3" height="1.3" fill="#9db2d4"/>
</svg>
<div class="t " id="t32" style="left:47.10px;top:576.13px;font-size:6.7px;color:#2a2e3a;transform:scale(0.974,1.0)">Measures</div>
<div class="t " id="t33" style="left:90.20px;top:576.13px;font-size:6.7px;color:#2a2e3a;transform:scale(0.941,1.0)">Luminance</div>
<div class="t " id="t34" style="left:135.20px;top:576.13px;font-size:6.7px;color:#2a2e3a;transform:scale(0.937,1.0)">Gamma</div>
<div class="t " id="t35" style="left:172.10px;top:576.13px;font-size:6.7px;color:#2a2e3a;transform:scale(0.967,1.0)">RGB Levels</div>
<div class="t b" id="t36" style="left:219.30px;top:575.96px;font-size:6.9px;color:#000;transform:scale(1.038,1.0)">Color temperature</div>
<div class="t g" id="t37" style="left:926.60px;top:574.22px;font-size:8.6px;color:#000;transform:scale(0.862,1.0)">Reference</div>
<div class="t " id="t38" style="left:1.00px;top:588.31px;font-size:9.2px;color:#1c1c1c;transform:scale(0.813,1.0)">Ready</div>
<div class="t " id="t39" style="left:885.40px;top:588.25px;font-size:8.8px;color:#1c1c1c;transform:scale(0.840,1.0)">CAP</div>
</div>
</body></html>
